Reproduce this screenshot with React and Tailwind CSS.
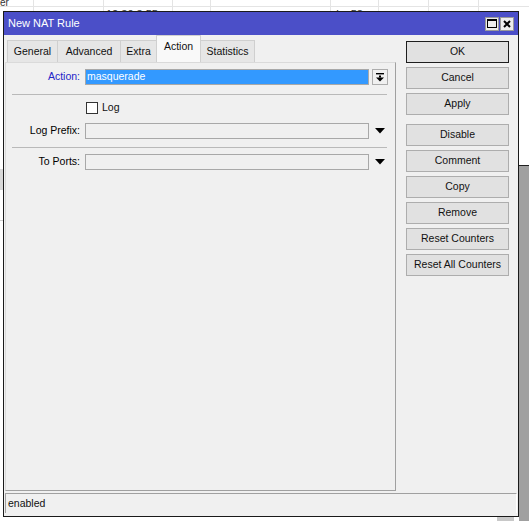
import React from "react";

const tabs = [
  { label: "General", w: "w-[51px]" },
  { label: "Advanced", w: "w-[64px]" },
  { label: "Extra", w: "w-[37px]" },
  { label: "Action", w: "w-[45px]", active: true },
  { label: "Statistics", w: "w-[55px]" },
];

const buttonsTop = ["Cancel", "Apply"];
const buttonsBottom = ["Disable", "Comment", "Copy", "Remove", "Reset Counters", "Reset All Counters"];

function DownArrow() {
  return (
    <div className="w-[16px] h-[16px] ml-[3px] flex items-center justify-center">
      <svg width="10" height="6" viewBox="0 0 10 6">
        <polygon points="0,0 10,0 5,5.5" fill="#000" />
      </svg>
    </div>
  );
}

function Field({ label, blue, children, dropdown }) {
  return (
    <div className="flex items-center h-[16px]">
      <div className={`w-[79px] pr-[5px] text-right ${blue ? "text-[#2323c8]" : "text-black"}`}>{label}</div>
      {children}
      {dropdown}
    </div>
  );
}

function Btn({ children, primary }) {
  return (
    <div
      className={`h-[22px] flex items-center justify-center bg-[#e1e1e1] border ${
        primary ? "border-[#1e1e1e]" : "border-[#adadad]"
      }`}
    >
      {children}
    </div>
  );
}

export default function App() {
  return (
    <div className="relative w-[529px] h-[521px] overflow-hidden bg-white font-['Liberation_Sans',Arial,sans-serif] text-[10.5px] text-[#111]">
      {/* window behind */}
      <div className="absolute left-0 top-[6px] w-[529px] border-t border-[#e4e4e4]" />
      <div className="absolute left-[33px] top-0 h-[11px] border-l border-[#e4e4e4]" />
      <div className="absolute left-[103px] top-0 h-[11px] border-l border-[#e4e4e4]" />
      <div className="absolute left-[172px] top-0 h-[11px] border-l border-[#e4e4e4]" />
      <div className="absolute left-[210px] top-0 h-[11px] border-l border-[#e4e4e4]" />
      <div className="absolute left-[330px] top-0 h-[11px] border-l border-[#e4e4e4]" />
      <div className="absolute left-[378px] top-0 h-[11px] border-l border-[#e4e4e4]" />
      <div className="absolute left-[428px] top-0 h-[11px] border-l border-[#e4e4e4]" />
      <div className="absolute left-[478px] top-0 h-[11px] border-l border-[#e4e4e4]" />
      <div className="absolute left-0 top-[-5px] text-[10px] text-[#333]">er</div>
      <div className="absolute left-[106px] top-[6px] text-[11px] text-[#333]">12:30:3.55</div>
      <div className="absolute left-[336px] top-[6px] text-[11px] text-[#333]">I s 58</div>
      <div className="absolute left-0 top-[169px] w-[3px] h-[21px] bg-[#d8d8d8]" />
      <div className="absolute left-0 top-[220px] w-[3px] border-t border-[#cfcfcf]" />
      <div className="absolute left-[519px] top-[165px] w-[10px] h-[356px] border-t border-[#202020] bg-[#a0a0a0]" />
      <div className="absolute left-[497px] top-[517px] w-[17px] h-[4px] bg-[#c8c8c8]" />

      {/* NAT rule window */}
      <div className="absolute left-[3px] top-[11px] w-[516px] h-[506px] border border-[#1a1a1a] bg-[#f0f0f0] flex flex-col">
        <div className="h-[23px] shrink-0 bg-[#4b4fc8] flex items-center pl-[4px] pr-[4px] text-white text-[11px]">
          <span className="flex-1">New NAT Rule</span>
          <div className="w-[14px] h-[14px] bg-[#ececec] border border-[#9a9a9a] flex items-center justify-center mr-[1px]">
            <div className="w-[10px] h-[9px] border border-black border-t-2" />
          </div>
          <div className="w-[14px] h-[14px] bg-[#ececec] border border-[#9a9a9a] flex items-center justify-center">
            <svg width="8" height="8" viewBox="0 0 8 8">
              <path d="M1 1 L7 7 M7 1 L1 7" stroke="#000" strokeWidth="2" />
            </svg>
          </div>
        </div>

        <div className="flex-1 flex">
          <div className="w-[391px] ml-[1px] mb-[2px] flex flex-col">
            <div className="h-[27px] flex items-end pl-[2px]">
              {tabs.map((t) => (
                <div
                  key={t.label}
                  className={`${t.w} -mr-px flex items-center justify-center border border-b-0 ${
                    t.active
                      ? "h-[27px] bg-[#f9f9f9] border-[#d0d0d0] relative z-10 pb-[4px]"
                      : "h-[22px] bg-[#e6e6e6] border-[#cfcfcf]"
                  }`}
                >
                  {t.label}
                </div>
              ))}
            </div>
            <div className="flex-1 border border-[#dadada] border-r-[#a0a0a0] border-b-[#a0a0a0] bg-[#f0f0f0] pt-[6px]">
              <Field
                label="Action:"
                blue
                dropdown={
                  <div className="w-[16px] h-[16px] ml-[3px] border border-[#adadad] bg-[#f0f0f0] flex items-center justify-center">
                    <svg width="8" height="9" viewBox="0 0 8 9">
                      <rect x="0" y="0" width="8" height="1.4" fill="#000" />
                      <rect x="3" y="2.5" width="2" height="2" fill="#000" />
                      <polygon points="0,4.5 8,4.5 4,8.5" fill="#000" />
                    </svg>
                  </div>
                }
              >
                <div className="w-[284px] h-[16px] border border-[#a8a8a8] bg-[#3399ff] text-white flex items-center pl-[1px]">
                  masquerade
                </div>
              </Field>

              <div className="ml-[6px] w-[375px] mt-[9px] border-t border-[#b9b9b9]" />

              <div className="flex items-center h-[12px] mt-[7px] ml-[80px]">
                <div className="w-[12px] h-[12px] border border-[#333] bg-white" />
                <span className="ml-[4px]">Log</span>
              </div>

              <div className="mt-[9px]">
                <Field label="Log Prefix:" dropdown={<DownArrow />}>
                  <div className="w-[284px] h-[16px] border border-[#a8a8a8] bg-[#f0f0f0]" />
                </Field>
              </div>

              <div className="ml-[6px] w-[375px] mt-[8px] border-t border-[#b9b9b9]" />

              <div className="mt-[6px]">
                <Field label="To Ports:" dropdown={<DownArrow />}>
                  <div className="w-[284px] h-[16px] border border-[#a8a8a8] bg-[#f0f0f0]" />
                </Field>
              </div>
            </div>
          </div>

          <div className="w-[103px] ml-[10px] pt-[6px] flex flex-col">
            <Btn primary>OK</Btn>
            <div className="flex flex-col gap-[4px] mt-[4px]">
              {buttonsTop.map((b) => (
                <Btn key={b}>{b}</Btn>
              ))}
            </div>
            <div className="flex flex-col gap-[4px] mt-[9px]">
              {buttonsBottom.map((b) => (
                <Btn key={b}>{b}</Btn>
              ))}
            </div>
          </div>
        </div>

        <div className="h-[20px] mx-[1px] mb-[3px] shrink-0 border-t border-l border-[#a0a0a0] border-r border-r-white flex items-center pl-[2px]">
          enabled
        </div>
      </div>
    </div>
  );
}
